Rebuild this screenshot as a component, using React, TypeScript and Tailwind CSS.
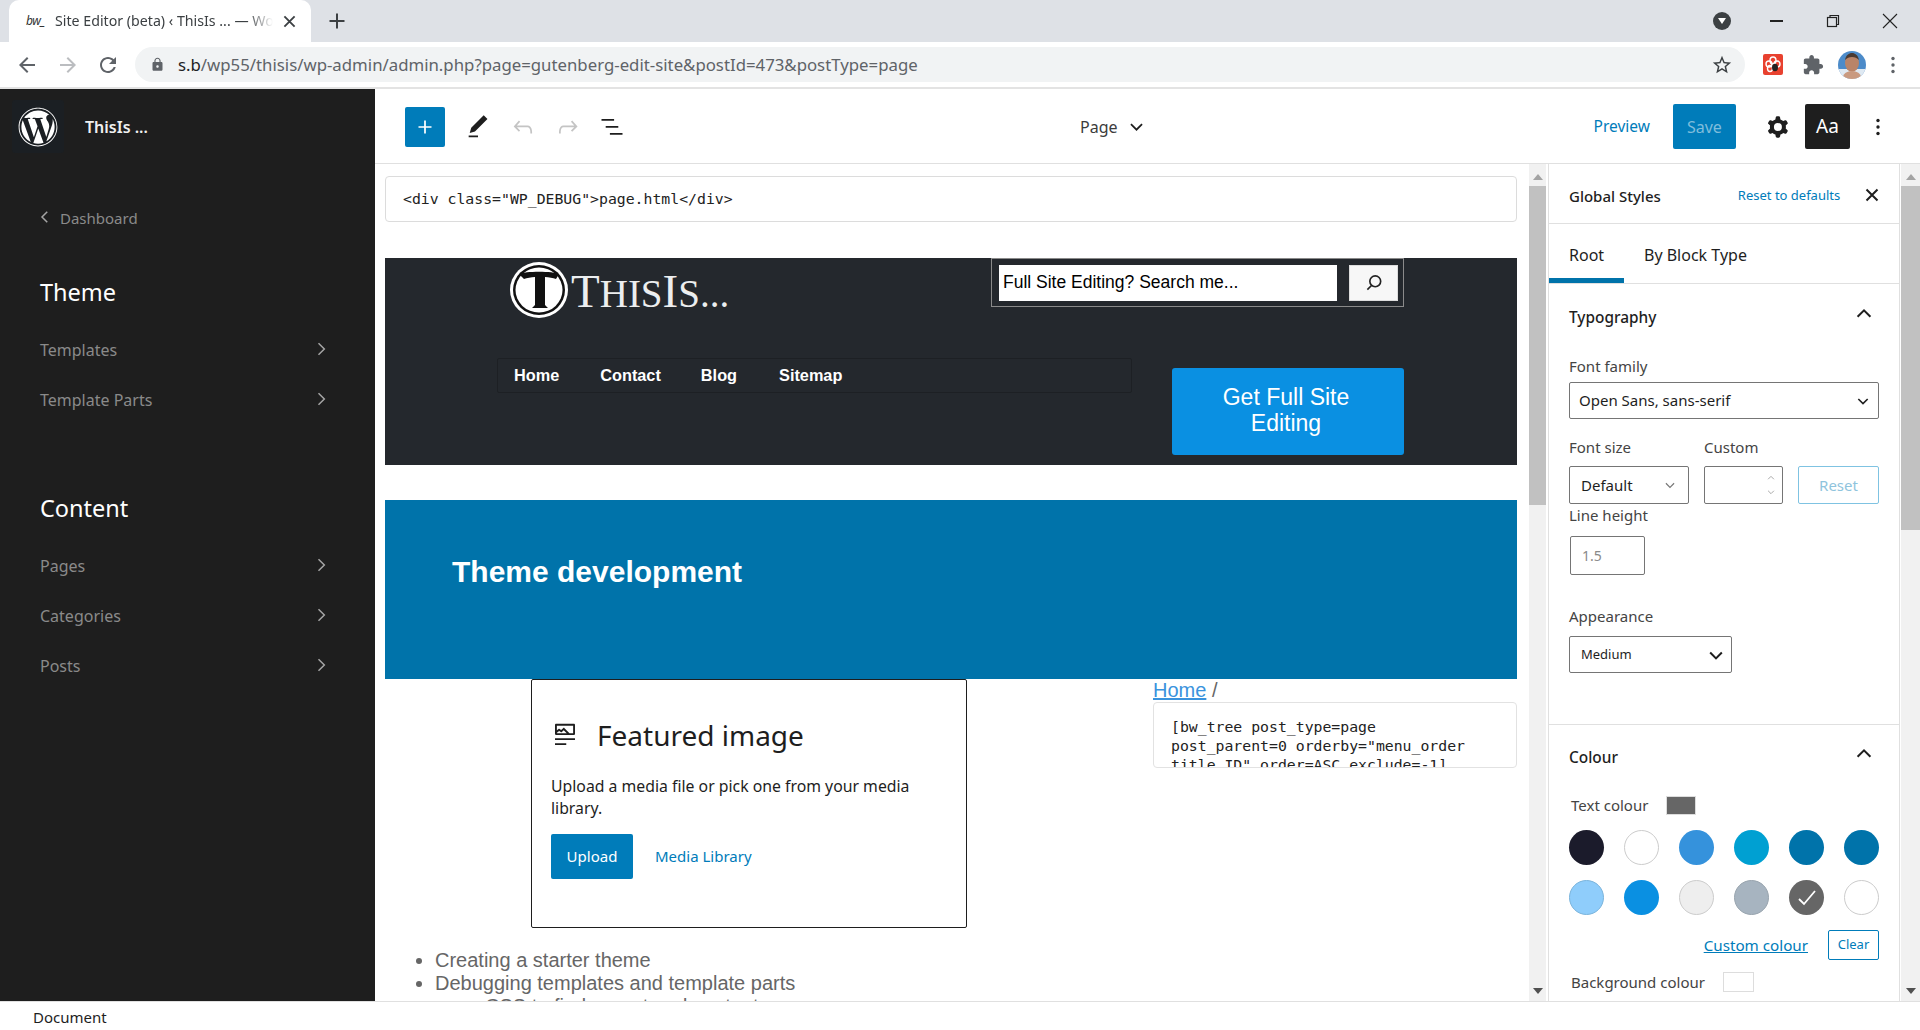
import React from "react";
import { FaWordpress } from "react-icons/fa";

const P = ({ d, s = 24, c = "", rule }: { d: string; s?: number; c?: string; rule?: boolean }) => (
  <svg width={s} height={s} viewBox="0 0 24 24" className={c} fill="currentColor">
    <path d={d} fillRule={rule ? "evenodd" : undefined} clipRule={rule ? "evenodd" : undefined} />
  </svg>
);
const Chev = ({ dir = "down", s = 16, w = 2, c = "" }: { dir?: "down" | "up" | "right" | "left"; s?: number; w?: number; c?: string }) => {
  const pts = { down: "5,9 12,16 19,9", up: "5,15 12,8 19,15", right: "9,5 16,12 9,19", left: "15,5 8,12 15,19" }[dir];
  return (
    <svg width={s} height={s} viewBox="0 0 24 24" className={c} fill="none" stroke="currentColor" strokeWidth={w}>
      <polyline points={pts} />
    </svg>
  );
};
const XIcon = ({ s = 14, w = 2, c = "" }: { s?: number; w?: number; c?: string }) => (
  <svg width={s} height={s} viewBox="0 0 14 14" className={c} fill="none" stroke="currentColor" strokeWidth={w}>
    <path d="M1.5 1.5l11 11M12.5 1.5l-11 11" />
  </svg>
);

const icons = {
  plus: "M18 11.2h-5.2V6h-1.6v5.2H6v1.6h5.2V18h1.6v-5.2H18z",
  pencil: "M20.1 5.1L16.9 2 6.2 12.7l-1.3 4.4 4.5-1.3L20.1 5.1zM4 20.8h8v-1.5H4v1.5z",
  undo: "M18.3 11.7c-.6-.6-1.4-.9-2.3-.9H6.7l2.9-3.3-1.1-1-4.5 5L8.5 16l1-1-2.7-2.7H16c.5 0 .9.2 1.3.5 1 1 1 3.4 1 4.5v.3h1.5v-.2c0-1.5 0-4.3-1.5-5.7z",
  redo: "M15.6 6.5l-1.1 1 2.9 3.3H8c-.9 0-1.7.3-2.3.9-1.4 1.5-1.4 4.2-1.4 5.6v.2h1.5v-.3c0-1.1 0-3.5 1-4.5.3-.3.7-.5 1.3-.5h9.2L14.5 15l1.1 1.1 4.6-4.6-4.6-5z",
  list: "M13.8 5.2H3v1.5h10.8V5.2zm-3.6 12v1.5H21v-1.5H10.2zm7.2-6H6.6v1.5h10.8v-1.5z",
  cog: "M10.289 4.836A1 1 0 0111.275 4h1.306a1 1 0 01.987.836l.244 1.466c.787.26 1.503.679 2.108 1.218l1.393-.522a1 1 0 011.216.437l.653 1.13a1 1 0 01-.23 1.273l-1.148.944a6.025 6.025 0 010 2.435l1.149.946a1 1 0 01.23 1.272l-.653 1.13a1 1 0 01-1.216.437l-1.394-.522c-.605.54-1.32.958-2.108 1.218l-.244 1.466a1 1 0 01-.987.836h-1.306a1 1 0 01-.986-.836l-.244-1.466a5.995 5.995 0 01-2.108-1.218l-1.394.522a1 1 0 01-1.217-.436l-.653-1.131a1 1 0 01.23-1.272l1.149-.946a6.026 6.026 0 010-2.435l-1.148-.944a1 1 0 01-.23-1.272l.653-1.131a1 1 0 011.217-.437l1.393.522a5.994 5.994 0 012.108-1.218l.244-1.466zM14.929 12a3 3 0 11-6 0 3 3 0 016 0z",
  featured: "M19 3H5c-.6 0-1 .4-1 1v7c0 .5.4 1 1 1h14c.5 0 1-.4 1-1V4c0-.6-.4-1-1-1zM5.5 10.5v-.4l1.8-1.3 1.3.8c.3.2.7.2.9-.1L11 8.1l2.4 2.4H5.5zm13 0h-2.9l-4-4c-.3-.3-.8-.3-1.1 0L8.9 8l-1.2-.8c-.3-.2-.6-.2-.9 0l-1.3 1V4.5h13v6zM4 20h9v-1.5H4V20zm0-4h16v-1.5H4V16z",
  back: "M20 11H7.83l5.59-5.59L12 4l-8 8 8 8 1.41-1.41L7.83 13H20v-2z",
  fwd: "M12 4l-1.41 1.41L16.17 11H4v2h12.17l-5.58 5.59L12 20l8-8z",
  reload: "M17.65 6.35C16.2 4.9 14.21 4 12 4c-4.42 0-7.99 3.58-7.99 8s3.57 8 7.99 8c3.73 0 6.84-2.55 7.73-6h-2.08c-.82 2.33-3.04 4-5.65 4-3.31 0-6-2.69-6-6s2.69-6 6-6c1.66 0 3.14.69 4.22 1.78L13 11h7V4l-2.35 2.35z",
  lock: "M18 8h-1V6c0-2.76-2.24-5-5-5S7 3.24 7 6v2H6c-1.1 0-2 .9-2 2v10c0 1.1.9 2 2 2h12c1.1 0 2-.9 2-2V10c0-1.1-.9-2-2-2zM12 17c-1.1 0-2-.9-2-2s.9-2 2-2 2 .9 2 2-.9 2-2 2zm3.1-9H8.9V6c0-1.71 1.39-3.1 3.1-3.1s3.1 1.39 3.1 3.1v2z",
  star: "M22 9.24l-7.19-.62L12 2 9.19 8.63 2 9.24l5.46 4.73L5.82 21 12 17.27 18.18 21l-1.63-7.03L22 9.24zM12 15.4l-3.76 2.27 1-4.28-3.32-2.88 4.38-.38L12 6.1l1.71 4.04 4.38.38-3.32 2.88 1 4.28L12 15.4z",
  puzzle: "M20.5 11H19V7c0-1.1-.9-2-2-2h-4V3.5C13 2.12 11.88 1 10.5 1S8 2.12 8 3.5V5H4c-1.1 0-1.99.9-1.99 2v3.8H3.5c1.49 0 2.7 1.21 2.7 2.7s-1.21 2.7-2.7 2.7H2V20c0 1.1.9 2 2 2h3.8v-1.5c0-1.49 1.21-2.7 2.7-2.7 1.49 0 2.7 1.21 2.7 2.7V22H17c1.1 0 2-.9 2-2v-4h1.5c1.38 0 2.5-1.12 2.5-2.5S21.88 11 20.5 11z",
};

const Dots = ({ c = "" }: { c?: string }) => (
  <svg width="24" height="24" viewBox="0 0 24 24" className={c} fill="currentColor">
    <circle cx="12" cy="5.5" r="1.7" />
    <circle cx="12" cy="12" r="1.7" />
    <circle cx="12" cy="18.5" r="1.7" />
  </svg>
);

function ChromeBar() {
  return (
    <div className="shrink-0">
      <div className="h-[42px] bg-[#dee1e6] flex items-end pl-[9px]">
        <div className="w-[302px] h-[42px] bg-white rounded-t-[10px] flex items-center pl-[17px]">
          <span className="w-[20px] text-[12px] italic tracking-[-0.5px] text-[#333]">bw_</span>
          <span className="ml-[9px] w-[218px] overflow-hidden whitespace-nowrap text-[14.2px] text-[#3c4043] [mask-image:linear-gradient(90deg,#000_88%,transparent)]">Site Editor (beta) ‹ ThisIs ... — WordPress</span>
          <XIcon s={13} w={2} c="ml-[10px] text-[#3c4043]" />
        </div>
        <P d={icons.plus} s={30} c="ml-[11px] mb-[6px] text-[#3c4043]" />
        <div className="ml-auto h-[42px] flex items-center">
          <span className="w-[18px] h-[18px] rounded-full bg-[#3c4043] flex items-center justify-center">
            <span className="w-0 h-0 border-l-[4px] border-r-[4px] border-t-[6px] border-l-transparent border-r-transparent border-t-white" />
          </span>
          <span className="ml-[39px] w-[13px] h-[1.5px] bg-[#222]" />
          <svg width="14" height="14" viewBox="0 0 14 14" className="ml-[43px]" fill="none" stroke="#222" strokeWidth="1.2">
            <rect x="1.5" y="3.5" width="9" height="9" />
            <path d="M4 3.5V1.5h8.5v9H10.5" />
          </svg>
          <svg width="16" height="16" viewBox="0 0 16 16" className="ml-[42px] mr-[22px]" fill="none" stroke="#222" strokeWidth="1.1">
            <path d="M1 1l14 14M15 1L1 15" />
          </svg>
        </div>
      </div>
      <div className="h-[47px] bg-white border-b-2 border-[#e3e3e3] flex items-center">
        <P d={icons.back} s={24} c="ml-[15px] text-[#5f6368]" />
        <P d={icons.fwd} s={24} c="ml-[17px] text-[#bbbdc0]" />
        <P d={icons.reload} s={24} c="ml-[16px] text-[#5f6368]" />
        <div className="ml-[15px] w-[1610px] h-[35px] rounded-full bg-[#f1f3f4] flex items-center pl-[15px]">
          <P d={icons.lock} s={15} c="text-[#5f6368]" />
          <span className="ml-[13px] text-[16.8px] text-[#202124] whitespace-nowrap">s.b<span className="text-[#5f6368]">/wp55/thisis/wp-admin/admin.php?page=gutenberg-edit-site&amp;postId=473&amp;postType=page</span></span>
          <P d={icons.star} s={22} c="ml-auto mr-[12px] text-[#3c4043]" />
        </div>
        <svg width="20" height="21" viewBox="0 0 20 21" className="ml-[18px]">
          <rect width="20" height="21" rx="2" fill="#e8412f" />
          <g fill="none" stroke="#fff" strokeWidth="1.4">
            <ellipse cx="10" cy="6.5" rx="3" ry="3.5" />
            <ellipse cx="6" cy="10" rx="3" ry="3" />
            <ellipse cx="14" cy="10" rx="3" ry="3" />
            <ellipse cx="7" cy="14.5" rx="2.5" ry="3" />
          </g>
          <ellipse cx="12" cy="13.5" rx="3" ry="3.8" fill="#222" />
        </svg>
        <P d={icons.puzzle} s={22} c="ml-[19px] text-[#5f6368]" />
        <svg width="28" height="28" viewBox="0 0 28 28" className="ml-[14px]">
          <defs>
            <clipPath id="av">
              <circle cx="14" cy="14" r="14" />
            </clipPath>
          </defs>
          <g clipPath="url(#av)">
            <rect width="28" height="28" fill="#4c8bc9" />
            <rect y="18" width="28" height="10" fill="#dfe9f2" />
            <ellipse cx="14" cy="12" rx="7" ry="9" fill="#b98468" />
            <path d="M7 9c1-5 4-7 7-7s6 2 7 7c-2-2-4-3-7-3s-5 1-7 3z" fill="#4a3a32" />
            <ellipse cx="14" cy="26" rx="9" ry="6" fill="#c99a80" />
          </g>
        </svg>
        <Dots c="ml-[15px] text-[#5f6368]" />
      </div>
    </div>
  );
}

function NavItem({ label }: { label: string }) {
  return (
    <div className="h-[50px] flex items-center justify-between pr-[44px] pl-[40px] text-[16px] text-[#8a8a8a]">
      <span>{label}</span>
      <Chev dir="right" s={20} w={1.8} c="text-[#a5a5a5] -mt-[2px]" />
    </div>
  );
}

function Sidebar() {
  return (
    <aside className="w-[375px] shrink-0 bg-[#1e1e1e] flex flex-col">
      <div className="flex items-center pl-[12px] pt-[11px]">
        <div className="w-[52px] h-[53px] rounded-[3px] bg-[#1b1f23] flex items-center justify-center">
          <FaWordpress className="text-white text-[40px]" />
        </div>
        <span className="ml-[21px] text-[16px] font-semibold text-[#f0f0f0]">ThisIs ...</span>
      </div>
      <div className="flex items-center mt-[53px] pl-[36px] text-[15px] text-[#8a8a8a] h-[24px]">
        <Chev dir="left" s={18} w={2} c="text-[#a5a5a5] -mt-[2px]" />
        <span className="ml-[6px]">Dashboard</span>
      </div>
      <div className="mt-[43px] pl-[40px] h-[40px] flex items-center text-[23.5px] text-white">Theme</div>
      <div className="mt-[12px]">
        <NavItem label="Templates" />
        <NavItem label="Template Parts" />
      </div>
      <div className="mt-[64px] pl-[40px] h-[40px] flex items-center text-[23.5px] text-white">Content</div>
      <div className="mt-[12px]">
        <NavItem label="Pages" />
        <NavItem label="Categories" />
        <NavItem label="Posts" />
      </div>
    </aside>
  );
}

function Toolbar() {
  return (
    <header className="h-[75px] shrink-0 border-b border-[#e0e0e0] bg-white flex items-center pt-[1px] text-[#1e1e1e]">
      <div className="ml-[30px] w-[40px] h-[40px] rounded-[2px] bg-[#007cba] flex items-center justify-center text-white">
        <P d={icons.plus} s={26} />
      </div>
      <P d={icons.pencil} s={28} c="ml-[19px]" />
      <P d={icons.undo} s={28} c="ml-[17px] text-[#c4c4c4]" />
      <P d={icons.redo} s={28} c="ml-[17px] text-[#c4c4c4]" />
      <P d={icons.list} s={28} c="ml-[16px]" />
      <span className="ml-[454px] text-[16px] text-[#3c3c3c]">Page</span>
      <Chev s={19} w={2.2} c="ml-[9px]" />
      <span className="ml-[448px] text-[15.5px] text-[#007cba]">Preview</span>
      <div className="ml-[23px] w-[63px] h-[45px] rounded-[2px] bg-[#007cba] flex items-center justify-center text-[16px] text-[#7fbddc]">Save</div>
      <P d={icons.cog} s={32} c="ml-[26px]" rule />
      <div className="ml-[11px] w-[45px] h-[45px] rounded-[2px] bg-[#1e1e1e] flex items-center justify-center text-[19px] text-white">Aa</div>
      <Dots c="ml-[16px]" />
    </header>
  );
}

function Canvas() {
  return (
    <div className="w-[1154px] shrink-0 overflow-hidden pl-[10px] text-[#555]">
      <div className="mt-[12px] w-[1132px] h-[46px] border border-[#dcdcdc] rounded-[4px] flex items-center pl-[17px] font-['DejaVu_Sans_Mono',monospace] text-[14.8px] text-[#222]">
        {'<div class="WP_DEBUG">page.html</div>'}
      </div>

      <section className="mt-[36px] w-[1132px] h-[207px] bg-[#24282d] flex font-['Liberation_Sans',sans-serif]">
        <div className="w-[606px] pl-[112px]">
          <div className="mt-[3px] ml-[12px] flex items-center h-[58px]">
            <svg width="60" height="58" viewBox="0 0 60 58" className="shrink-0">
              <ellipse cx="30" cy="29" rx="29" ry="28" fill="#fff" />
              <ellipse cx="30" cy="29" rx="26" ry="25" fill="#111" />
              <ellipse cx="30" cy="29" rx="23.5" ry="22.5" fill="#fff" />
              <path d="M10 13c6-3 34-3 40 0l-3 5c-3-1-7-2-11-2v28l3 3H23l3-3V16c-4 0-8 1-11 2z" fill="#111" />
            </svg>
            <span className="ml-[2px] text-[#eceeef] font-['Liberation_Serif',serif] whitespace-nowrap leading-none mt-[2px]">
              <span className="text-[47px]">T</span><span className="text-[39px]">HIS</span><span className="text-[47px]">I</span><span className="text-[39px]">S...</span>
            </span>
          </div>
          <nav className="mt-[39px] w-[635px] h-[35px] rounded-[2px] border border-[#1d2024] flex items-center pl-[16px] text-[16.3px] font-bold text-white">
            <span>Home</span>
            <span className="ml-[41px]">Contact</span>
            <span className="ml-[40px]">Blog</span>
            <span className="ml-[42px]">Sitemap</span>
          </nav>
        </div>
        <div className="w-[413px] flex flex-col items-end">
          <div className="w-[413px] h-[49px] border border-[#8a8a8a] flex items-center pl-[7px]">
            <div className="w-[338px] h-[36px] bg-white flex items-center pl-[4px] text-[17.5px] text-black">Full Site Editing? Search me...</div>
            <div className="ml-[12px] w-[49px] h-[36px] bg-[#f7f7f7] border border-[#ddd] flex items-center justify-center">
              <svg width="20" height="20" viewBox="0 0 24 24" fill="none" stroke="#222" strokeWidth="2">
                <circle cx="13.5" cy="10" r="6.5" />
                <path d="M9 15l-5 5" />
              </svg>
            </div>
          </div>
          <div className="mt-[61px] w-[232px] h-[87px] rounded-[3px] bg-[#0a90e2] text-white text-[23px] leading-[26px] flex items-center justify-center text-center pl-[36px] pr-[40px] pb-[3px]">
            Get Full Site Editing
          </div>
        </div>
      </section>

      <section className="mt-[35px] w-[1132px] h-[179px] bg-[#0073aa] pl-[67px] pt-[53px] text-[30px] leading-[38px] font-bold text-white font-['Liberation_Sans',sans-serif]">
        Theme development
      </section>

      <div className="flex">
        <div className="ml-[146px] w-[436px] h-[249px] border border-[#1e1e1e] rounded-[2px] pl-[19px] pr-[18px] pt-[39px] text-[#1e1e1e]">
          <div className="flex items-center h-[32px]">
            <P d={icons.featured} s={30} c="-ml-[1px]" />
            <span className="ml-[17px] text-[28px] leading-[32px]">Featured image</span>
          </div>
          <p className="mt-[24px] text-[15.8px] leading-[22px]">Upload a media file or pick one from your media library.</p>
          <div className="mt-[15px] flex items-center">
            <div className="w-[82px] h-[45px] rounded-[2px] bg-[#007cba] flex items-center justify-center text-[15px] text-white">Upload</div>
            <span className="ml-[22px] text-[15px] text-[#007cba]">Media Library</span>
          </div>
        </div>
        <div className="ml-[186px] w-[364px]">
          <div className="h-[23px] text-[20px] leading-[23px] font-['Liberation_Sans',sans-serif] text-[#666]">
            <span className="text-[#3a93dd] underline">Home</span> /
          </div>
          <div className="w-[364px] h-[66px] border border-[#e2e2e2] rounded-[4px] overflow-hidden pl-[17px] pt-[14px] font-['DejaVu_Sans_Mono',monospace] text-[14.8px] leading-[19px] text-[#222]">
            <div>[bw_tree post_type=page</div>
            <div>post_parent=0 orderby="menu_order</div>
            <div>title ID" order=ASC exclude=-1]</div>
          </div>
        </div>
      </div>

      <ul className="mt-[21px] pl-[50px] list-disc text-[20px] leading-[23px] text-[#666] font-['Liberation_Sans',sans-serif]">
        <li>Creating a starter theme</li>
        <li>Debugging templates and template parts
          <ul className="pl-[50px] list-[circle]">
            <li>CSS to find parent and content</li>
          </ul>
        </li>
      </ul>
    </div>
  );
}

function Scroll({ thumb, c = "" }: { thumb: number; c?: string }) {
  return (
    <div className={`h-full shrink-0 flex flex-col items-center bg-[#f1f1f1] ${c}`}>
      <span className="mt-[10px] w-0 h-0 border-l-[5px] border-r-[5px] border-b-[6px] border-l-transparent border-r-transparent border-b-[#a3a3a3]" />
      <div className="mt-[6px] w-full bg-[#c1c1c1]" style={{ height: thumb }} />
      <span className="mt-auto mb-[7px] w-0 h-0 border-l-[5px] border-r-[5px] border-t-[6px] border-l-transparent border-r-transparent border-t-[#505050]" />
    </div>
  );
}

const swatches = [
  "bg-[#1b1b2b]",
  "bg-white border border-[#ccc]",
  "bg-[#3592dc]",
  "bg-[#00a0d2]",
  "bg-[#0073aa]",
  "bg-[#0073aa]",
  "bg-[#8fcdfb] border border-[#7ab4dc]",
  "bg-[#0a90e2]",
  "bg-[#eeeeee] border border-[#ccc]",
  "bg-[#a7b4c0] border border-[#98a4ae]",
  "bg-[#666666]",
  "bg-white border border-[#ccc]",
];

function Panel() {
  return (
    <div className="w-[352px] shrink-0 border-x border-[#e0e0e0] overflow-hidden text-[15px] text-[#1e1e1e] bg-white">
      <div className="h-[60px] border-b border-[#e0e0e0] flex items-center pl-[20px] pt-[5px]">
        <span className="text-[15px] font-medium">Global Styles</span>
        <span className="ml-[77px] text-[13px] text-[#007cba]">Reset to defaults</span>
        <XIcon s={14} w={2} c="ml-[25px] -mt-[3px]" />
      </div>
      <div className="h-[60px] border-b border-[#e0e0e0] flex text-[16px]">
        <div className="w-[75px] border-b-[5px] border-[#0073aa] pl-[20px] pt-[19px]">Root</div>
        <div className="ml-[20px] pt-[19px]">By Block Type</div>
      </div>
      <div className="h-[441px] border-b border-[#e0e0e0] pl-[20px] pt-[22px]">
        <div className="h-[24px] w-[310px] flex items-center justify-between pr-[4px]">
          <span className="font-medium text-[15.4px]">Typography</span>
          <Chev dir="up" s={22} w={2.2} c="-mt-[8px]" />
        </div>
        <div className="mt-[24px] h-[24px] leading-[24px] text-[15px] text-[#444]">Font family</div>
        <div className="mt-[4px] w-[310px] h-[37px] border border-[#757575] rounded-[2px] flex items-center justify-between pl-[9px] pr-[7px] text-[15px]">
          <span>Open Sans, sans-serif</span>
          <Chev s={16} w={2.4} />
        </div>
        <div className="mt-[17px] flex">
          <div className="w-[135px]">
            <div className="h-[22px] leading-[22px] text-[#444]">Font size</div>
            <div className="mt-[8px] w-[120px] h-[38px] border border-[#757575] rounded-[2px] flex items-center justify-between pl-[11px] pr-[11px] text-[15px]">
              <span>Default</span>
              <Chev s={14} w={2} c="text-[#777]" />
            </div>
          </div>
          <div className="w-[94px]">
            <div className="h-[22px] leading-[22px] text-[#444]">Custom</div>
            <div className="mt-[8px] w-[79px] h-[38px] border border-[#757575] rounded-[2px] flex flex-col items-end justify-center pr-[6px] text-[#aaa]">
              <Chev dir="up" s={10} w={2.4} />
              <Chev s={10} w={2.4} c="mt-[4px]" />
            </div>
          </div>
          <div className="w-[81px] mt-[30px] h-[38px] border border-[#7fc3e2] rounded-[2px] flex items-center justify-center text-[15px] text-[#8fc4dd]">Reset</div>
        </div>
        <div className="h-[22px] leading-[22px] text-[#444]">Line height</div>
        <div className="mt-[10px] ml-[1px] w-[75px] h-[39px] border border-[#757575] rounded-[2px] flex items-center pl-[11px] text-[14px] text-[#8a8a8a]">1.5</div>
        <div className="mt-[30px] h-[22px] leading-[22px] text-[#444]">Appearance</div>
        <div className="mt-[9px] w-[163px] h-[37px] border border-[#757575] rounded-[2px] flex items-center justify-between pl-[11px] pr-[5px] text-[13px]">
          <span>Medium</span>
          <Chev s={20} w={2.4} />
        </div>
      </div>
      <div className="pl-[20px] pt-[21px]">
        <div className="h-[24px] w-[310px] flex items-center justify-between pr-[4px]">
          <span className="font-medium text-[15.4px]">Colour</span>
          <Chev dir="up" s={22} w={2.2} c="-mt-[8px]" />
        </div>
        <div className="mt-[23px] ml-[2px] h-[24px] flex items-center text-[#444]">
          <span>Text colour</span>
          <span className="ml-[18px] w-[30px] h-[19px] bg-[#666] border border-[#ddd]" />
        </div>
        <div className="mt-[13px] w-[310px] grid grid-cols-6 gap-x-[20px] gap-y-[15px]">
          {swatches.map((c, i) => (
            <span key={i} className={`w-[35px] h-[35px] rounded-full flex items-center justify-center ${c}`}>
              {i === 10 && (
                <svg width="24" height="24" viewBox="0 0 24 24" fill="none" stroke="#fff" strokeWidth="1.8">
                  <path d="M4 13l5 5L20 5" />
                </svg>
              )}
            </span>
          ))}
        </div>
        <div className="mt-[15px] w-[310px] h-[30px] flex items-center justify-end">
          <span className="text-[15.2px] text-[#007cba] underline">Custom colour</span>
          <span className="ml-[20px] w-[51px] h-[30px] border border-[#007cba] rounded-[2px] flex items-center justify-center text-[13px] text-[#007cba]">Clear</span>
        </div>
        <div className="mt-[10px] ml-[2px] h-[24px] flex items-center text-[#444]">
          <span>Background colour</span>
          <span className="ml-[18px] w-[31px] h-[20px] bg-white border border-[#ddd]" />
        </div>
      </div>
    </div>
  );
}

export default function App() {
  return (
    <div className="w-[1920px] h-[1030px] overflow-hidden bg-white flex flex-col font-['Noto_Sans','Open_Sans',sans-serif]">
      <ChromeBar />
      <div className="h-[912px] flex">
        <Sidebar />
        <div className="flex-1 min-w-0 flex flex-col">
          <Toolbar />
          <div className="flex-1 min-h-0 flex">
            <Canvas />
            <Scroll thumb={319} c="w-[17px] mr-[2px]" />
            <Panel />
            <Scroll thumb={344} c="w-[19px] ml-[1px]" />
          </div>
        </div>
      </div>
      <div className="h-[29px] border-t border-[#e0e0e0] flex items-center pl-[33px] pt-[2px] text-[15px] text-[#1e1e1e]">Document</div>
    </div>
  );
}
